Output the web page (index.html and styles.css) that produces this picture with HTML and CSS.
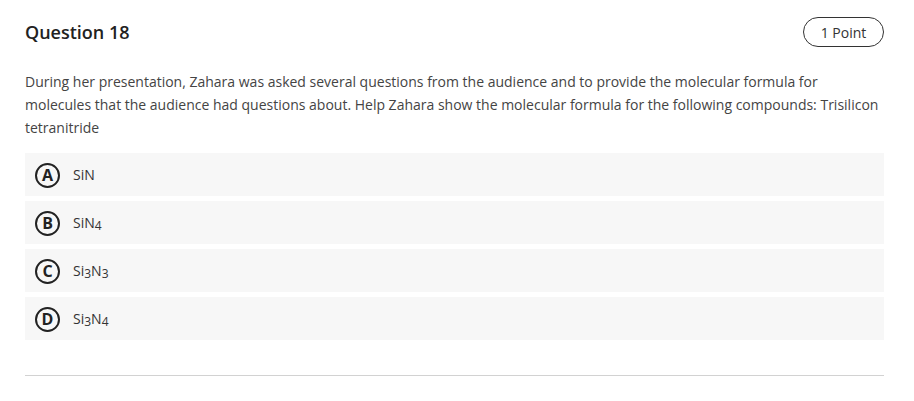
FILE: index.html
```html
<!DOCTYPE html>
<html>
<head>
<meta charset="utf-8">
<link rel="stylesheet" href="styles.css">
</head>
<body>
<div class="question">
  <div class="header">
    <h2 class="title">Question 18</h2>
    <span class="points">1 Point</span>
  </div>
  <p class="prompt">During her presentation, Zahara was asked several questions from the audience and to provide the molecular formula for molecules that the audience had questions about. Help Zahara show the molecular formula for the following compounds: Trisilicon tetranitride</p>
  <div class="options">
    <div class="option"><span class="letter">A</span><span class="label">SiN</span></div>
    <div class="option"><span class="letter">B</span><span class="label">SiN<span class="sub">4</span></span></div>
    <div class="option"><span class="letter">C</span><span class="label">Si<span class="sub">3</span>N<span class="sub">3</span></span></div>
    <div class="option"><span class="letter">D</span><span class="label">Si<span class="sub">3</span>N<span class="sub">4</span></span></div>
  </div>
  <div class="divider"></div>
</div>
</body>
</html>
```
FILE: styles.css
```css
html, body {
  margin: 0;
  padding: 0;
  background: #fff;
}
body {
  font-family: "Open Sans", "Liberation Sans", sans-serif;
  color: #444;
}
.question {
  padding: 17px 30px 0 25px;
}
.header {
  display: flex;
  justify-content: space-between;
  align-items: center;
  height: 30px;
}
.title {
  margin: 0;
  font-size: 18px;
  font-weight: 600;
  color: #222;
  line-height: 30px;
}
.points {
  box-sizing: border-box;
  height: 30px;
  width: 81px;
  border: 1px solid #333;
  border-radius: 15px;
  font-size: 14px;
  color: #333;
  display: flex;
  align-items: center;
  justify-content: center;
}
.prompt {
  margin: 23px 0 14px 0;
  font-size: 14px;
  line-height: 23px;
  color: #444;
}
.options {
  display: flex;
  flex-direction: column;
  gap: 5px;
}
.option {
  height: 43px;
  background: #f7f7f7;
  display: flex;
  align-items: center;
  padding-left: 10px;
}
.letter {
  box-sizing: border-box;
  width: 25px;
  height: 25px;
  border: 2px solid #222;
  border-radius: 50%;
  display: flex;
  align-items: center;
  justify-content: center;
  font-size: 16px;
  font-weight: 700;
  color: #222;
  margin-top: 1px;
}
.label {
  margin-left: 13px;
  font-size: 14px;
  color: #333;
}
.sub {
  font-size: 12px;
  position: relative;
  top: 2px;
}
.divider {
  margin-top: 35px;
  height: 1px;
  background: #d2d2d2;
}
```
